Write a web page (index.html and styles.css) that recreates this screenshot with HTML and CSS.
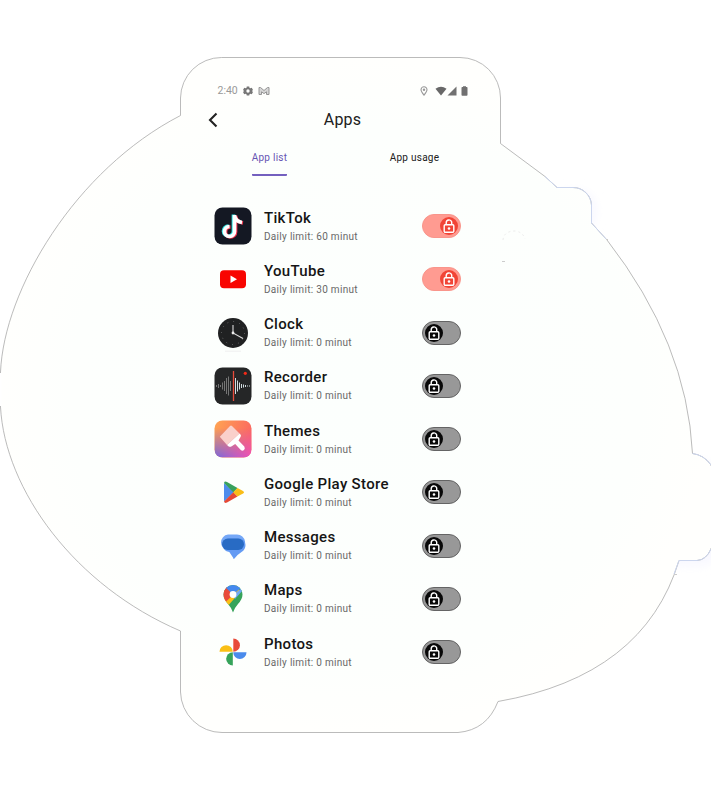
FILE: index.html
```html
<!DOCTYPE html>
<html lang="en">
<head>
<meta charset="utf-8">
<title>Apps</title>
<link rel="stylesheet" href="styles.css">
</head>
<body>
<svg class="backdrop" viewBox="0 0 711 790" aria-hidden="true">
  <defs>
    <filter id="soft" x="-30%" y="-30%" width="160%" height="160%"><feGaussianBlur stdDeviation="5"/></filter>
    <radialGradient id="tint"><stop offset="0" stop-color="#fcfffd"/><stop offset=".8" stop-color="#fdfffd"/><stop offset="1" stop-color="#fffffd"/></radialGradient>
  </defs>
  <g fill="#f8f8ff" filter="url(#soft)"><rect x="552" y="190" width="44" height="42" rx="18"/><rect x="660" y="460" width="60" height="106" rx="20"/></g>
  <path fill="url(#tint)" stroke="#aaa" stroke-width=".8" d="M180.500 115.500V98A41 41 0 0 1 221.500 57.500H460A40.500 40.500 0 0 1 500.500 98V143.500L545 176.500L557 187.500H573A18.500 18.500 0 0 1 591.500 205V223L607 240Q687 343 692.500 453.500Q704 455 711 465V549Q706 560 697 560.500H679Q644 676 498 701.500Q487 730 458 732.500H222A41.500 41.500 0 0 1 180.500 692V631C75 586 5 490 .5 407V372C4 290 75 170 180.500 115.500Z"/>
  <path fill="none" stroke="#ccd6ee" d="M545 176.500L557 187.500H573A18.500 18.500 0 0 1 591.500 205V223L607 240M692.500 453.500Q704 455 711 465M711 549Q706 560 697 560.500H679L674 574"/>
  <path stroke="#fff" stroke-width="2" d="M.5 373v33M711 466v82"/>
  <path fill="none" stroke="#ececec" stroke-dasharray="2 3" d="M503 240Q504 231 515 231Q523 232 525 239"/>
  <path stroke="#ccc" d="M502 261.500h3M606 239.500h2M674 574.500h3"/>
</svg>

<svg class="sprite" aria-hidden="true">
  <symbol id="lock" viewBox="0 0 12 16"><path d="M3.200 7V4.600a2.800 2.800 0 0 1 5.500-.6V6" fill="none" stroke="currentColor" stroke-width="1.400"/><rect x="1.200" y="6.700" width="9.600" height="7.500" rx="1" fill="none" stroke="currentColor" stroke-width="1.400"/><circle cx="6" cy="10.500" r="1.300" fill="currentColor"/></symbol>
</svg>

<main class="screen">
  <div class="status">
    <div class="status-side">
      <span class="time">2:40</span>
      <svg class="gear" viewBox="0 0 24 24"><path fill="#777" fill-rule="evenodd" d="M9 1h6l.7 3.500 2 1.100 3.300-1.200 3 5.200-2.700 2.400 2.700 2.400-3 5.200-3.300-1.200-2 1.100L15 23H9l-.7-3.500-2-1.100L3 19.600 0 14.400 2.700 12 0 9.600l3-5.200 3.300 1.200 2-1.100zM12 8a4 4 0 1 0 0 8 4 4 0 0 0 0-8z"/></svg>
      <svg class="gmail" viewBox="0 0 12 10"><path fill="#d5d5d5" stroke="#969696" stroke-width="1" d="M1 8.500V1.500h1.500L6 4.500l3.500-3H11v7H8.500V5.800L6 7.600 3.500 5.800v2.700z"/></svg>
    </div>
    <div class="status-side">
      <svg class="place" viewBox="0 0 8 10"><path fill="none" stroke="#999" stroke-width="1.100" d="M4 9.200C2.200 6.900 1 5.300 1 3.800a3 3 0 0 1 6 0C7 5.300 5.800 6.900 4 9.200z"/><circle cx="4" cy="3.800" r="1.200" fill="#999"/></svg>
      <svg class="wifi" viewBox="0 0 12 10"><path fill="#686868" d="M.5 2.800Q6-1.200 11.500 2.800L6 9.500z"/></svg>
      <svg class="signal" viewBox="0 0 10 10"><path fill="#717171" d="M9.500.5v9H.5z"/></svg>
      <svg class="battery" viewBox="0 0 7 10"><path fill="#707070" d="M2 .2h3V1h.7q.8 0 .8.8v7q0 .9-.8.9H1.300Q.5 9.700.5 8.800v-7Q.5 1 1.300 1H2z"/></svg>
    </div>
  </div>

  <header class="header">
    <svg class="back" viewBox="0 0 10 16"><path d="M8.500 1.500 2 8l6.500 6.500" fill="none" stroke="#222" stroke-width="2.100"/></svg>
    <h1>Apps</h1>
  </header>

  <nav class="tabs">
    <div class="tab"><span class="tab-label active">App list</span></div>
    <div class="tab"><span class="tab-label">App usage</span></div>
  </nav>

  <ul class="apps">
    <li class="app">
      <svg class="icon" viewBox="0 0 38 38"><rect x=".5" y=".5" width="37" height="37" rx="8" fill="#141823"/><g fill="none" stroke-width="3.700"><path stroke="#39e5e5" d="M19.500 7.500V24a5 5 0 1 1-5-5M19.500 8q1 6 7.500 7"/><path stroke="#f53550" d="M21.500 8.500V25a5 5 0 1 1-5-5M21.500 9q1 6 7.500 7"/><path stroke="#fff" d="M20.500 8V24.500a5 5 0 1 1-5-5M20.500 8.500q1 6 7.500 7"/></g></svg>
      <div class="copy"><h2>TikTok</h2><p>Daily limit: 60 minut</p></div>
      <span class="toggle on"><span class="knob"><svg><use href="#lock"/></svg></span></span>
    </li>
    <li class="app">
      <svg class="icon" viewBox="0 0 38 38"><rect x="6" y="10.300" width="26" height="18" rx="4" fill="#f80501"/><path fill="#fff" d="m16.500 15.500 6.500 3.800-6.500 3.800z"/></svg>
      <div class="copy"><h2>YouTube</h2><p>Daily limit: 30 minut</p></div>
      <span class="toggle on"><span class="knob"><svg><use href="#lock"/></svg></span></span>
    </li>
    <li class="app">
      <svg class="icon" viewBox="0 0 38 38"><path stroke="#efefef" d="M11 37.200h16"/><circle cx="19" cy="19" r="15" fill="#202122"/><circle cx="19" cy="19" r="11.500" fill="none" stroke="#777" stroke-dasharray=".8 5.220"/><path d="M19 11v8l10 5.500" fill="none" stroke="#ddd" stroke-width="1.100"/><circle cx="19" cy="19" r="1.400" fill="#eee"/></svg>
      <div class="copy"><h2>Clock</h2><p>Daily limit: 0 minut</p></div>
      <span class="toggle"><span class="knob"><svg><use href="#lock"/></svg></span></span>
    </li>
    <li class="app">
      <svg class="icon" viewBox="0 0 38 38"><rect x=".5" y=".5" width="37" height="37" rx="8" fill="#252627"/><path stroke="#757575" d="M2.500 18v2M4.500 17v4M6.500 18v2M8.500 15.500v7M10.500 14v10M12.500 11v16M14.500 9.500v19M16.500 14v10"/><path stroke="#d2dce1" d="M21.500 11v16M23.500 13.500v11M25.500 15.500v7M27.500 17v4M29.500 17.500v3M31.500 18v2M33.500 18.500v1M35.500 18.500v1"/><path stroke="#e64a3b" stroke-width="1.300" d="M19.500 4v30"/><circle cx="31.300" cy="6.300" r="1.600" fill="#f32a18"/></svg>
      <div class="copy"><h2>Recorder</h2><p>Daily limit: 0 minut</p></div>
      <span class="toggle"><span class="knob"><svg><use href="#lock"/></svg></span></span>
    </li>
    <li class="app">
      <svg class="icon" viewBox="0 0 38 38"><defs><linearGradient id="warm" x2="1" y2=".3"><stop stop-color="#ffa552"/><stop offset="1" stop-color="#fb6961"/></linearGradient><linearGradient id="cool" x2="1"><stop stop-color="#7569dc"/><stop offset="1" stop-color="#ef51b7"/></linearGradient><linearGradient id="fade" x2="0" y2="1"><stop offset=".2" stop-color="#000"/><stop offset="1" stop-color="#fff"/></linearGradient><mask id="lower" maskContentUnits="objectBoundingBox"><path fill="url(#fade)" d="M0 0h1v1H0z"/></mask></defs><rect x=".5" y=".5" width="37" height="37" rx="8" fill="url(#warm)"/><rect x=".5" y=".5" width="37" height="37" rx="8" fill="url(#cool)" mask="url(#lower)"/><path fill="#fad0cb" d="M5.800 16.800 16 6q1-1 2 0l7.500 7.500L13 25z"/><path fill="#fff" d="m25.500 13.500 1 1q1 1 0 2.500l-2 3.500 5.800 6q1.200 2-.3 3.500-1.700 1.500-3.200 0l-5.600-6-3.500 2.200q-1.700 1-3 .2L13 25z"/></svg>
      <div class="copy"><h2>Themes</h2><p>Daily limit: 0 minut</p></div>
      <span class="toggle"><span class="knob"><svg><use href="#lock"/></svg></span></span>
    </li>
    <li class="app">
      <svg class="icon" viewBox="0 0 38 38"><path fill="#4e8cec" d="M10 10v18.500L20 19z"/><path fill="#38a15c" d="M10 10q.6-2.200 3-1l10.500 6-4 4.500z"/><path fill="#e54936" d="m10 28.500 9.500-9.500 4 4.500-10.500 6q-2.400 1.200-3-1z"/><path fill="#f9bd18" d="m23.500 15 5.500 3q2 1.300 0 2.600l-5.500 3-4.300-4.300z"/></svg>
      <div class="copy"><h2>Google Play Store</h2><p>Daily limit: 0 minut</p></div>
      <span class="toggle"><span class="knob"><svg><use href="#lock"/></svg></span></span>
    </li>
    <li class="app">
      <svg class="icon" viewBox="0 0 38 38"><path fill="#75a8f7" d="M14 7.500h9a8 8 0 0 1 8 7 8 8 0 0 1-8 9h-9a8 8 0 0 1-7-8 8 8 0 0 1 7-8z"/><path fill="#649bf3" d="M16 11.500h9q6.500 0 6.500 6.500 0 4.500-4 7-4 2.500-7 6.500-1.200 1-1.200-.5l-4-6Q9 24 9 18q0-6.500 7-6.500z"/><rect x="8" y="11.500" width="22" height="11.500" rx="5.750" fill="#286bc4"/></svg>
      <div class="copy"><h2>Messages</h2><p>Daily limit: 0 minut</p></div>
      <span class="toggle"><span class="knob"><svg><use href="#lock"/></svg></span></span>
    </li>
    <li class="app">
      <svg class="icon" viewBox="0 0 38 38"><defs><clipPath id="pin"><path d="M19 32.500q-1-4-5-8.500-4.500-5-4.500-9.500a9.500 9.500 0 0 1 19 0q0 4.500-4.500 9.500-4 4.500-5 8.500z"/></clipPath></defs><g clip-path="url(#pin)"><path fill="#36a35a" d="M0 0h38v38H0z"/><path fill="#fabf16" d="m5 23 18-19 3 8L13 27z"/><path fill="#e94b3b" d="M5 7h12l2 8-8.500 8H5z"/><path fill="#4489ef" d="m10 6 9 8.500L28 7V2H10z"/><path fill="#70a8f5" d="m19 15 10-8v3l-8 9z"/></g><circle cx="19" cy="14.500" r="3.400" fill="#fffffc"/></svg>
      <div class="copy"><h2>Maps</h2><p>Daily limit: 0 minut</p></div>
      <span class="toggle"><span class="knob"><svg><use href="#lock"/></svg></span></span>
    </li>
    <li class="app">
      <svg class="icon" viewBox="0 0 38 38"><path fill="#e84b3b" d="M19.300 5.500a6.650 6.650 0 0 1 0 13.300z"/><path fill="#4a8bec" d="M32.500 19.300a6.650 6.650 0 0 1-13.300 0z"/><path fill="#36a35a" d="M18.800 32.500a6.650 6.650 0 0 1 0-13.300z"/><path fill="#fabf16" d="M5.500 18.800a6.650 6.650 0 0 1 13.300 0z"/></svg>
      <div class="copy"><h2>Photos</h2><p>Daily limit: 0 minut</p></div>
      <span class="toggle"><span class="knob"><svg><use href="#lock"/></svg></span></span>
    </li>
  </ul>
</main>
</body>
</html>
```
FILE: styles.css
```css
* { box-sizing: border-box; }
body { margin: 0; width: 711px; height: 790px; overflow: hidden; background: #fff; font-family: Roboto, sans-serif; color: #202020; }
.backdrop { position: absolute; inset: 0; width: 711px; height: 790px; z-index: -1; }
.sprite { position: absolute; width: 0; height: 0; }
h1, h2, p, ul { margin: 0; padding: 0; }
.screen { width: 320px; margin-left: 181px; padding-top: 84px; }
.status { height: 14px; padding: 0 33.500px 0 36.500px; display: flex; justify-content: space-between; align-items: center; }
.status-side { display: flex; align-items: center; }
.time { font-size: 10.500px; line-height: 14px; color: #999; width: 25px; }
.gear { width: 10px; height: 10px; margin-right: 5px; }
.gmail { width: 12px; height: 10px; }
.place { width: 8px; height: 10px; margin-right: 7px; }
.wifi { width: 12px; height: 10px; }
.signal { width: 10px; height: 10px; margin-right: 4px; }
.battery { width: 7px; height: 10px; }
.header { height: 43px; display: grid; grid-template-columns: 37px 1fr 34px; align-items: center; }
.back { width: 10px; height: 16px; justify-self: end; }
h1 { text-align: center; font-size: 16px; line-height: 20px; font-weight: 400; letter-spacing: .2px; }
.tabs { display: grid; grid-template-columns: 145px 145px; padding-left: 16px; height: 58.500px; padding-top: 9px; }
.tab { display: flex; justify-content: center; }
.tab-label { height: 26px; line-height: 16px; font-size: 10px; letter-spacing: .25px; border-bottom: 2px solid transparent; }
.active { color: #6755b3; border-color: #7460bf; border-radius: 1px; }
.apps { list-style: none; padding: 0 40px 0 33px; }
.app { height: 53.250px; display: flex; align-items: center; }
.icon { width: 38px; height: 38px; flex: none; margin-right: 12px; }
.copy { flex: 1; white-space: nowrap; }
h2 { font-size: 15px; line-height: 18px; font-weight: 500; letter-spacing: .32px; color: #151515; }
p { font-size: 10px; line-height: 14px; margin-top: 3px; letter-spacing: .3px; color: #686868; }
.toggle { width: 39px; height: 24px; border-radius: 12px; border: 1px solid #646464; background: #989898; display: flex; align-items: center; padding: 0 2px; flex: none; }
.knob { width: 18px; height: 18px; border-radius: 50%; background: #080808; color: #fff; display: flex; align-items: center; justify-content: center; }
.knob svg { width: 12px; height: 16px; }
.on { background: #ff9b91; border-color: #f9958b; justify-content: flex-end; }
.on .knob { background: #f14436; }
```
